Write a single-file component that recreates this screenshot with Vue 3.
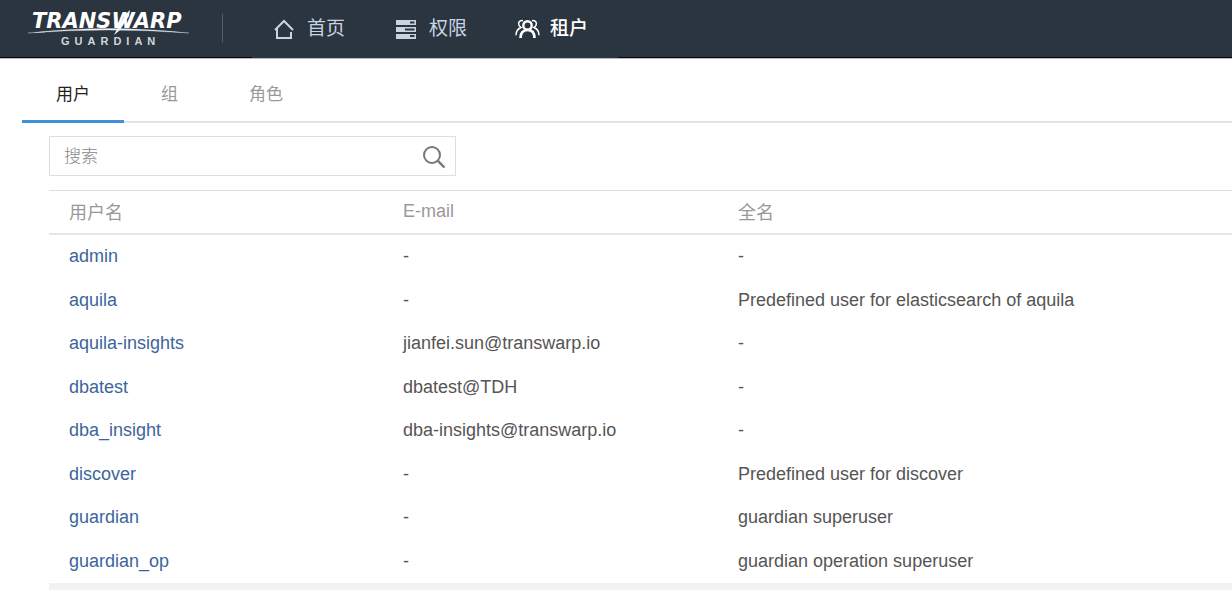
<script setup>
import { ref } from 'vue'

const search = ref('')
const activeTab = ref('用户')
const tabs = ['用户', '组', '角色']
const columns = ['用户名', 'E-mail', '全名']
const users = [
  { name: 'admin', email: '-', fullName: '-' },
  { name: 'aquila', email: '-', fullName: 'Predefined user for elasticsearch of aquila' },
  { name: 'aquila-insights', email: 'jianfei.sun@transwarp.io', fullName: '-' },
  { name: 'dbatest', email: 'dbatest@TDH', fullName: '-' },
  { name: 'dba_insight', email: 'dba-insights@transwarp.io', fullName: '-' },
  { name: 'discover', email: '-', fullName: 'Predefined user for discover' },
  { name: 'guardian', email: '-', fullName: 'guardian superuser' },
  { name: 'guardian_op', email: '-', fullName: 'guardian operation superuser' }
]
</script>

<template>
  <div class="page">
    <header class="topbar">
      <a class="brand" href="#">
        <svg width="166" height="42" viewBox="0 0 166 42" role="img" aria-label="Transwarp Guardian">
          <text class="wordmark" x="4" y="18">TRANSWARP</text>
          <path d="M102 0 L97 5 L87 23 L86 25 L92 20 L101 6 Z" fill="#fff" />
          <path d="M0 23 Q80 14 161 23 Q80 17 0 23 Z" fill="#fff" stroke="#b9c0c7" stroke-width="0.4" />
          <text class="submark" x="33" y="35">GUARDIAN</text>
        </svg>
      </a>
      <span class="divider"></span>
      <nav class="nav">
        <a class="nav-item" href="#">
          <svg width="20" height="20" viewBox="0 0 20 20" fill="none" stroke="currentColor" stroke-width="2">
            <path d="M1 11 L10 2 L19 11" />
            <path d="M3 9 V19 H17 V13" />
          </svg>
          <span>首页</span>
        </a>
        <a class="nav-item" href="#">
          <svg width="20" height="20" viewBox="0 0 20 20">
            <path fill="currentColor" fill-rule="evenodd" d="M0 1H20V6H0ZM14 2.5V4.5H18.5V2.5ZM0 8H20V13H0ZM9 9.5V11.5H18.5V9.5ZM0 15H20V20H0ZM14 16V18H18.5V16Z" />
          </svg>
          <span>权限</span>
        </a>
        <a class="nav-item active" href="#" aria-current="page">
          <svg width="26" height="20" viewBox="0 0 26 20" fill="none" stroke="currentColor">
            <circle cx="12.5" cy="6.4" r="4.2" stroke-width="2.4" />
            <path d="M5.5 19 C5.5 13.8 8 11 12.5 11 S19.5 13.8 19.5 19" stroke-width="2.7" />
            <path d="M8 1.7 C5 1.2 3.6 3 3.6 4.8 C3.6 6.5 4.6 7.7 6 8.5 C2.8 9.8 1 12.3 1 16.2" stroke-width="1.5" />
            <path d="M17 1.7 C20 1.2 21.4 3 21.4 4.8 C21.4 6.5 20.4 7.7 19 8.5 C22.2 9.8 24 12.3 24 16.2" stroke-width="1.5" />
          </svg>
          <span>租户</span>
        </a>
      </nav>
    </header>

    <main class="content">
      <div class="tabs" role="tablist">
        <button
          v-for="tab in tabs"
          :key="tab"
          class="tab"
          :class="{ selected: tab === activeTab }"
          type="button"
          role="tab"
          :aria-selected="tab === activeTab"
          @click="activeTab = tab"
        >{{ tab }}</button>
      </div>

      <section class="panel">
        <form class="search" @submit.prevent>
          <input v-model="search" type="text" placeholder="搜索" aria-label="搜索" />
          <button type="submit" aria-label="搜索">
            <svg width="24" height="24" viewBox="0 0 24 24" fill="none" stroke="#777" stroke-width="2">
              <circle cx="10" cy="10" r="8" />
              <path d="M15.7 15.7 L22.5 22.5" stroke-width="2.4" />
            </svg>
          </button>
        </form>

        <table class="users">
          <thead>
            <tr>
              <th v-for="column in columns" :key="column" scope="col">{{ column }}</th>
            </tr>
          </thead>
          <tbody>
            <tr v-for="user in users" :key="user.name">
              <td><a href="#">{{ user.name }}</a></td>
              <td>{{ user.email }}</td>
              <td>{{ user.fullName }}</td>
            </tr>
          </tbody>
        </table>
        <div class="table-footer"></div>
      </section>
    </main>
  </div>
</template>

<style>
body {
  margin: 0;
  background: #fff;
}
</style>

<style scoped>
.page {
  font-family: "Liberation Sans", "Noto Sans CJK SC", sans-serif;
  font-size: 18px;
  color: #555;
}
.page * {
  box-sizing: border-box;
}
.topbar {
  display: flex;
  align-items: stretch;
  height: 58px;
  background: linear-gradient(#05080b, #05080b) bottom / 100% 1px no-repeat #2b3540;
  box-shadow: 0 1px 0 #b9bcbf;
}
.brand {
  display: flex;
  align-items: center;
  padding: 4px 0 0 28px;
}
.wordmark {
  font: italic bold 21px "DejaVu Sans", sans-serif;
  fill: #fff;
}
.submark {
  font: bold 11px "Liberation Sans", sans-serif;
  letter-spacing: 5px;
  fill: #cfd5da;
}
.divider {
  align-self: center;
  width: 1px;
  height: 28px;
  margin: 0 29px 2px 28px;
  background: #56606a;
}
.nav {
  display: flex;
}
.nav-item {
  display: flex;
  align-items: center;
  gap: 13px;
  width: 122px;
  padding: 0 0 1px 22px;
  font-size: 19px;
  line-height: 28px;
  color: #c9d3e2;
  background: #2b3540;
  text-decoration: none;
}
.nav-item.active {
  gap: 9px;
  padding-left: 19px;
  color: #fff;
  font-weight: 500;
}
.content {
  padding-left: 22px;
}
.tabs {
  display: flex;
  gap: 3px;
  height: 65px;
  background: linear-gradient(#e4e4e4, #e4e4e4) bottom / 100% 2px no-repeat;
}
.tab {
  padding: 7px 34px 0;
  border: 0;
  border-bottom: 3px solid transparent;
  background: none;
  font-family: inherit;
  font-size: 17px;
  color: #999;
}
.tab.selected {
  color: #222;
  border-bottom-color: #3f90d6;
}
.panel {
  padding: 13px 0 0 27px;
}
.search {
  display: flex;
  width: 407px;
  height: 40px;
  margin-bottom: 14px;
  border: 1px solid #d8dfe7;
}
.search input {
  flex: 1;
  min-width: 0;
  padding: 2px 14px 0;
  border: 0;
  outline: 0;
  background: none;
  font-family: inherit;
  font-size: 17px;
  font-weight: 300;
  color: #555;
}
.search input::placeholder {
  color: #888;
  opacity: 1;
}
.search button {
  display: flex;
  align-items: center;
  padding: 2px 9px 0;
  border: 0;
  background: none;
}
.users {
  width: 100%;
  table-layout: fixed;
  border-collapse: separate;
  border-spacing: 0;
}
.users th {
  height: 45px;
  padding: 0 20px 2px;
  border-top: 1px solid #dedede;
  border-bottom: 2px solid #e6e6e6;
  font-weight: 400;
  text-align: left;
  color: #999;
}
.users th:nth-child(1) {
  width: 334px;
}
.users th:nth-child(2) {
  width: 335px;
}
.users td {
  height: 43px;
  padding: 0 20px;
  white-space: nowrap;
}
.users tr:nth-child(even) td {
  height: 44px;
}
.users a {
  color: #3c659c;
  text-decoration: none;
}
.table-footer {
  height: 8px;
  background: #f1f2f4;
}
</style>
